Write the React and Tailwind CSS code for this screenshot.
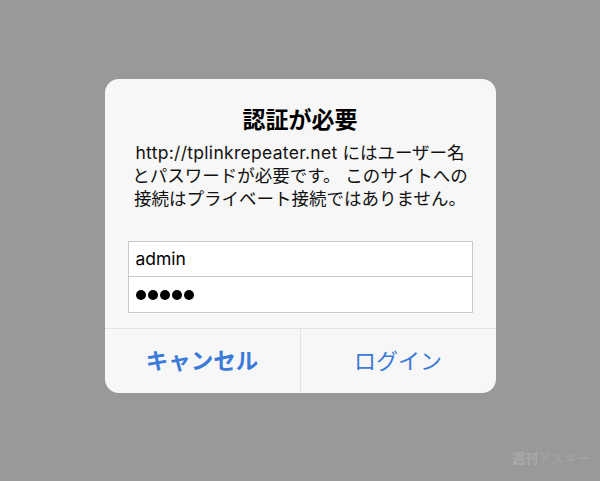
export default function App() {
  return (
    <div
      className="flex h-[481px] w-[600px] justify-center bg-[#999999] pt-[79px]"
      style={{ fontFamily: 'Inter, "Noto Sans CJK JP", sans-serif' }}
    >
      <div className="flex h-[314px] w-[391px] flex-col rounded-[14px] bg-[#f7f7f7]">
        <div className="px-4 pt-[27px] text-center">
          <h2 className="text-[23px] font-bold leading-[29px] text-black">認証が必要</h2>
          <p className="mt-[6px] text-[17.5px] leading-[23px] text-[#111]">
            <span className="tracking-[0.3px]">http://tplinkrepeater.net</span> にはユーザー名
            <br />
            とパスワードが必要です。 このサイトへの
            <br />
            接続はプライベート接続ではありません。
          </p>
        </div>

        <div className="mx-[23px] mt-[31px] border border-[#c9c9c9] bg-white">
          <div className="flex h-[35px] items-center border-b border-[#c9c9c9] px-[7px] text-[17.5px] text-black">
            admin
          </div>
          <div className="flex h-[35px] items-center gap-[2px] px-[7px]">
            {[0, 1, 2, 3, 4].map((i) => (
              <span key={i} className="h-[10px] w-[10px] rounded-full bg-black" />
            ))}
          </div>
        </div>

        <div className="mt-auto flex h-[65px] border-t border-[#e3e3e3]">
          <button
            type="button"
            className="flex flex-1 items-center justify-center border-r border-[#e3e3e3] text-[22.5px] font-bold text-[#3a7ad8]"
          >
            キャンセル
          </button>
          <button
            type="button"
            className="flex flex-1 items-center justify-center text-[22px] text-[#3a7ad8]"
          >
            ログイン
          </button>
        </div>
      </div>

      <div className="absolute left-[512px] top-[452px] text-[13px] font-bold leading-none text-[#a9a9a9]">
        週刊<span className="text-[#a1a1a1]">アスキー</span>
      </div>
    </div>
  );
}
